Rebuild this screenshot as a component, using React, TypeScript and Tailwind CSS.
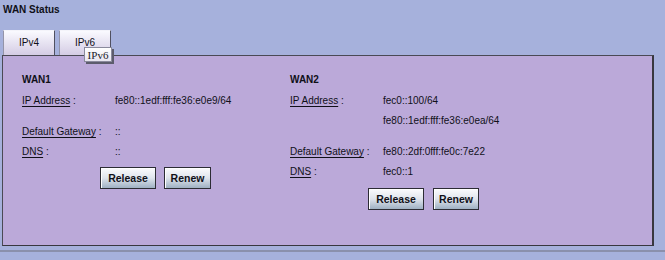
import React from "react";

function Btn({ label, w }: { label: string; w: string }) {
  return (
    <div
      className={`${w} h-[22px] border border-[#2c2c34] bg-gradient-to-b from-[#fbfbfd] via-[#dfe4ec] to-[#9fb1c3] flex items-center justify-center font-bold text-[10.5px] text-[#101018] shadow-[inset_1px_1px_0_#ffffff]`}
    >
      {label}
    </div>
  );
}

function Row({
  label,
  value,
  h = "h-[20px]",
}: {
  label?: string;
  value?: string;
  h?: string;
}) {
  return (
    <div className={`flex items-center ${h}`}>
      <div className="w-[93px] shrink-0">
        {label ? (
          <>
            <span className="underline underline-offset-[2px]">{label}</span>
            <span> :</span>
          </>
        ) : null}
      </div>
      <div>{value}</div>
    </div>
  );
}

export default function App() {
  return (
    <div className="w-[665px] h-[260px] bg-[#a6b1dc] relative overflow-hidden font-['Liberation_Sans',Arial,sans-serif] text-[10px] leading-[12px] text-[#101018]">
      <div className="h-[30px] pl-[3px] pt-[4px] font-bold">WAN Status</div>
      <div className="flex h-[25px] pl-[3px] gap-[4px]">
        <div className="w-[52px] h-[25px] border-t border-l border-r border-t-[#f4f4fa] border-l-[#9494a8] border-r-[#505060] bg-gradient-to-b from-[#fafaff] to-[#d4cce4] flex items-center justify-center">
          IPv4
        </div>
        <div className="w-[52px] h-[25px] border-t border-l border-r border-t-[#f4f4fa] border-l-[#9494a8] border-r-[#505060] bg-gradient-to-b from-[#fafaff] to-[#d4cce4] flex items-center justify-center">
          IPv6
        </div>
      </div>
      <div className="ml-[2px] w-[652px] h-[191px] border-t border-l border-b border-r-2 border-t-[#4a4a54] border-l-[#4a4a54] border-b-[#38383f] border-r-[#38383f] bg-[#bba9d9] flex pt-[14px] pl-[19px]">
        <div className="w-[268px] flex flex-col">
          <div className="h-[20px] mb-[1px] flex items-center font-bold">WAN1</div>
          <Row label="IP Address" value="fe80::1edf:fff:fe36:e0e9/64" h="h-[31px] items-start pt-[4px]" />
          <Row label="Default Gateway" value="::" />
          <Row label="DNS" value="::" />
          <div className="flex gap-[8px] ml-[78px] mt-[5px]">
            <Btn label="Release" w="w-[56px]" />
            <Btn label="Renew" w="w-[47px]" />
          </div>
        </div>
        <div className="w-[300px] flex flex-col">
          <div className="h-[20px] mb-[1px] flex items-center font-bold">WAN2</div>
          <Row label="IP Address" value="fec0::100/64" />
          <Row value="fe80::1edf:fff:fe36:e0ea/64" h="h-[31px] items-start pt-[4px]" />
          <Row label="Default Gateway" value="fe80::2df:0fff:fe0c:7e22" />
          <Row label="DNS" value="fec0::1" />
          <div className="flex gap-[9px] ml-[78px] mt-[6px]">
            <Btn label="Release" w="w-[56px]" />
            <Btn label="Renew" w="w-[46px]" />
          </div>
        </div>
      </div>
      <div className="mt-[4px] h-[2px] bg-[#8a90ac]" />
      <div className="absolute left-[84px] top-[47px] w-[28px] h-[15px] border border-[#8a8a9c] bg-gradient-to-b from-[#ffffff] to-[#e8e6f0] shadow-[2px_2px_0_#5c5c6c] flex items-center justify-center font-['Liberation_Serif',serif] text-[11px] text-[#202028]">
        IPv6
      </div>
    </div>
  );
}
